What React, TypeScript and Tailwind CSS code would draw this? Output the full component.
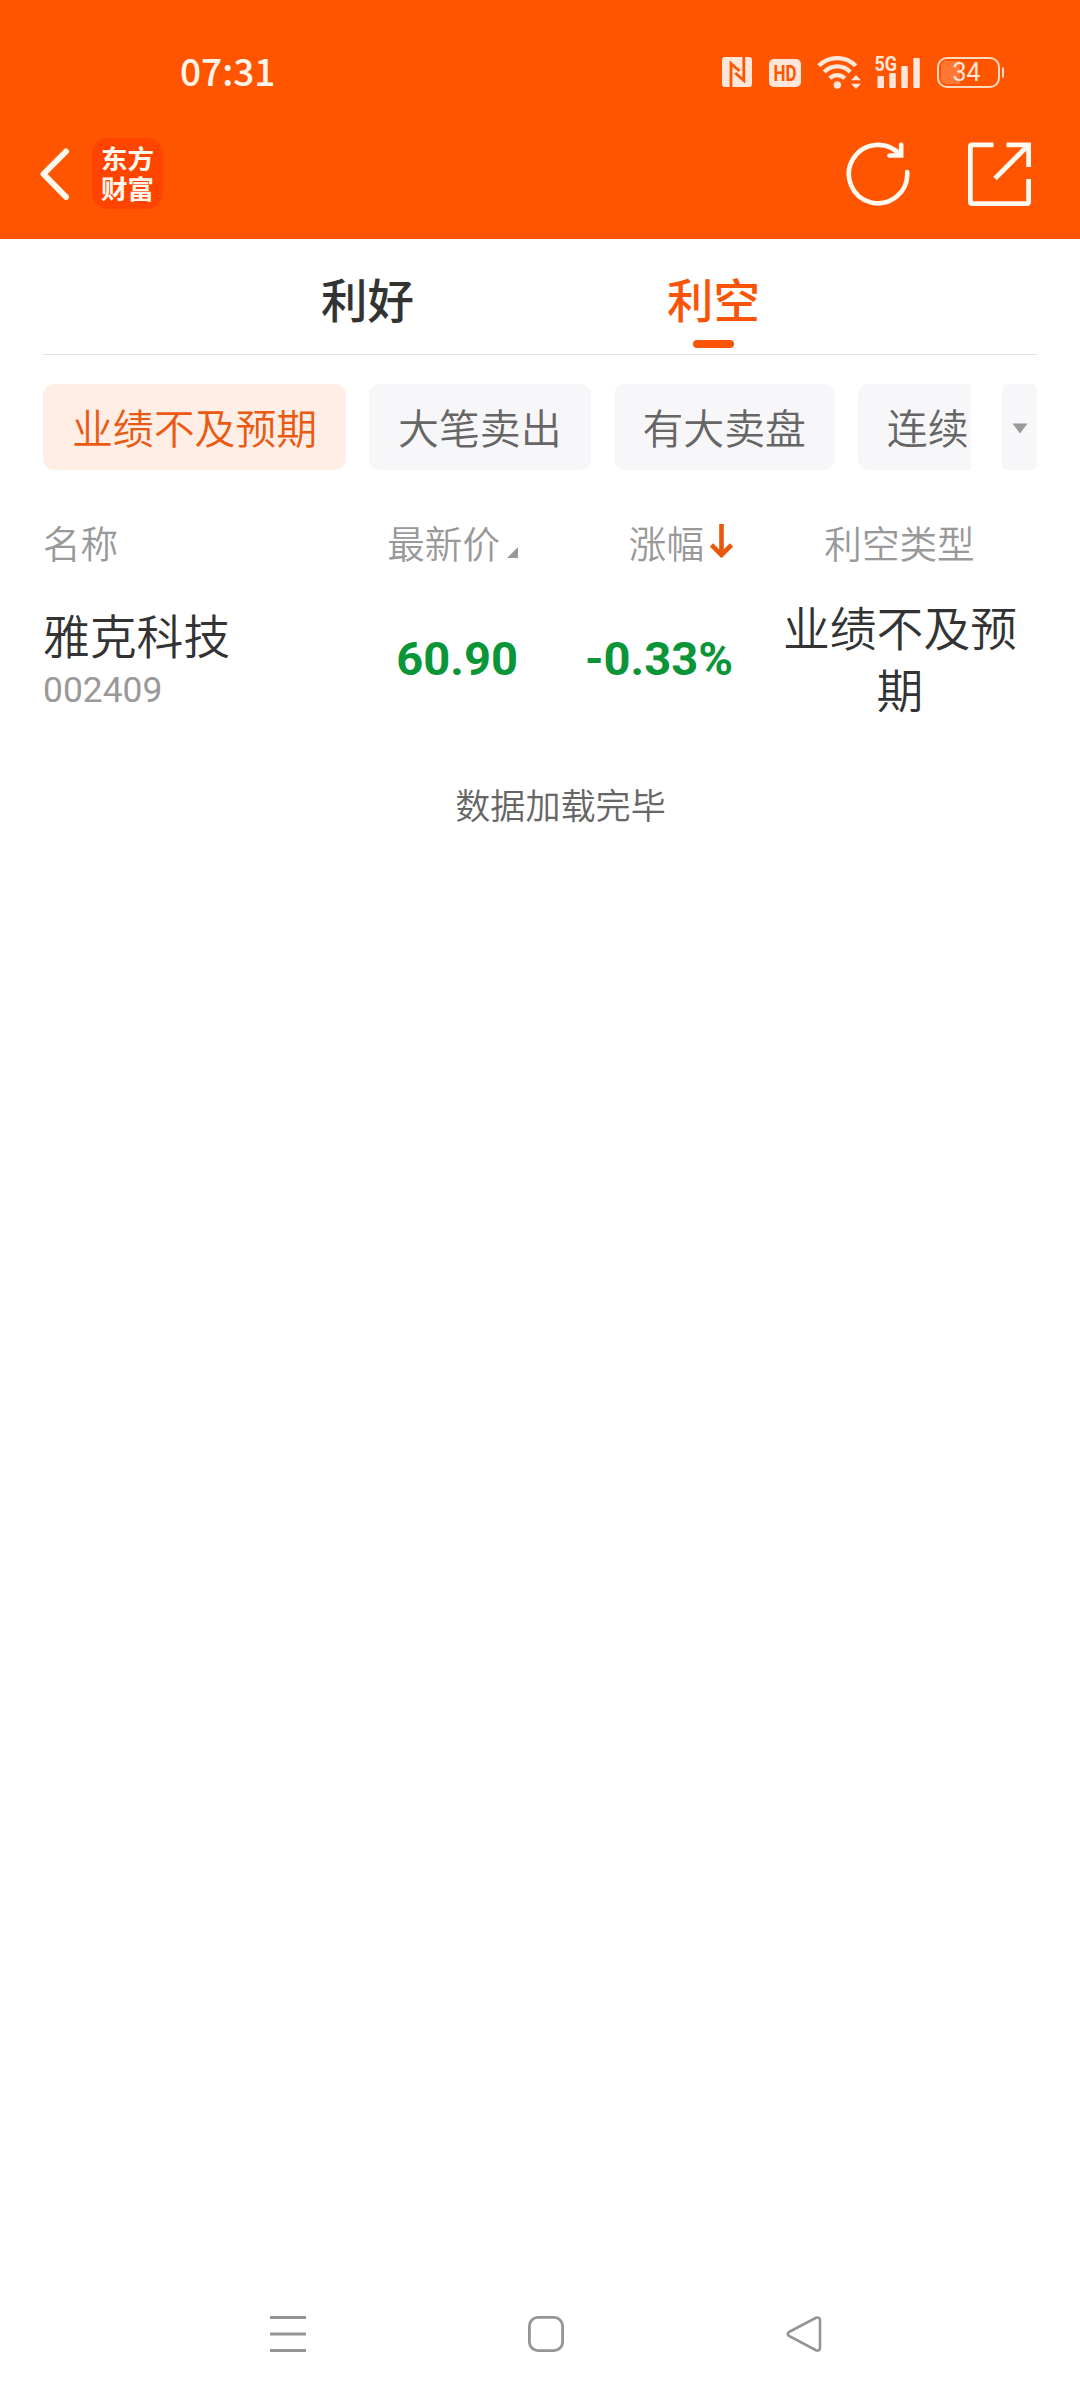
import { useState } from 'react'

interface Stock {
    name: string
    code: string
    price: string
    change: string
    type: string
}

const tabs = ['利好', '利空']
const tags = ['业绩不及预期', '大笔卖出', '有大卖盘', '连续']
const stocks: Stock[] = [
    { name: '雅克科技', code: '002409', price: '60.90', change: '-0.33%', type: '业绩不及预期' },
]

function StatusBar() {
    return (
        <div className="flex h-[108px] items-center pt-9 pr-[76px] pl-[180px] text-[#ffe6d8]">
            <span className="pb-[3px] text-[37px] leading-none font-medium text-[#fff5ea]">07:31</span>
            {/* NFC */}
            <svg className="ml-auto" width="30" height="30" viewBox="0 0 30 30">
                <rect width="30" height="30" rx="3" fill="currentColor" />
                <path d="M9 30V6.5L17.5 14M21.8 0V23.5L13.3 16" fill="none" stroke="#ff5500" strokeWidth="2.8" />
            </svg>
            {/* HD */}
            <svg className="mt-0.5 ml-[17px]" width="32" height="28" viewBox="0 0 32 28">
                <rect width="32" height="28" rx="5" fill="currentColor" />
                <text x="4.5" y="22" textLength="23" lengthAdjust="spacingAndGlyphs" fontSize="22.5" fontWeight="700" fontFamily="Roboto, sans-serif" fill="#ff5500">HD</text>
            </svg>
            {/* Wi-Fi */}
            <svg className="ml-4" width="44" height="34" viewBox="0 0 44 34">
                <g fill="none" stroke="currentColor" strokeWidth="4.2">
                    <path d="M1.8 10.8A26 26 0 0 1 38.8 10.8" />
                    <path d="M7.3 17A18 18 0 0 1 33.3 17" />
                    <path d="M12.8 23.2A10.5 10.5 0 0 1 27.8 23.2" />
                </g>
                <circle cx="20.3" cy="30" r="3.7" fill="currentColor" />
                <path d="M34 25.2L39 20L44 25.2ZM34 28.8L39 34L44 28.8Z" fill="currentColor" />
            </svg>
            {/* 5G signal */}
            <svg className="ml-3 overflow-visible" width="49" height="34" viewBox="-1 0 49 34">
                <text x="0.5" y="16.2" textLength="22.5" lengthAdjust="spacingAndGlyphs" fontSize="21" fontWeight="700" fontFamily="Roboto, sans-serif" fill="currentColor">5G</text>
                <g fill="currentColor">
                    <rect x="3.5" y="21" width="6.5" height="12" rx="1" />
                    <rect x="15.3" y="18" width="6.5" height="15" rx="1" />
                    <rect x="27.3" y="11" width="6.5" height="22" rx="1" />
                    <rect x="39.3" y="3" width="6.5" height="30" rx="1" />
                </g>
            </svg>
            {/* battery */}
            <div className="ml-[15px] flex h-[31px] w-[63px] items-center rounded-[10px] border-[2.5px] border-[#ffd9bd] p-0.5">
                <div className="h-full w-[19px] rounded-l-[5px] bg-[#ff7733]" />
                <span className="-ml-[7px] font-[Roboto] text-[25px] leading-none font-normal">34</span>
            </div>
            <div className="ml-0.5 h-[11px] w-[2.5px] rounded-r bg-[#ffd9bd]" />
        </div>
    )
}

function NavBar() {
    return (
        <div className="flex h-[131px] items-center pr-[49px] pl-[38px] text-[#fff9f0]">
            <svg width="32" height="54" viewBox="0 0 32 54" fill="none" stroke="currentColor" strokeWidth="6">
                <path d="M28 4.5L5.5 27L28 50" strokeLinecap="round" strokeLinejoin="round" />
            </svg>
            <div className="ml-[22px] flex h-[71px] w-[71px] flex-col items-center justify-center rounded-[16px] bg-[#ff4400] pb-0.5 text-[26.5px] leading-[30px] font-bold">
                <span>东方</span>
                <span>财富</span>
            </div>
            <svg className="ml-auto" width="64" height="64" viewBox="0 0 64 64" fill="none" stroke="currentColor" strokeWidth="4.6">
                <path d="M61.2 30A29.2 29.2 0 1 1 54 12.8" strokeLinecap="round" />
                <path d="M43.5 13.5H55.2V2.8" strokeLinecap="round" />
            </svg>
            <svg className="ml-[57px]" width="64" height="64" viewBox="0 0 64 64" fill="none" stroke="currentColor" strokeWidth="4.8">
                <path d="M26.5 2.9H5Q3.4 2.9 3.4 4.5V60Q3.4 61.6 5 61.6H60Q61.6 61.6 61.6 60V37" />
                <path d="M39.5 2.9H61.6V25M61 3.5L28 36.5" />
            </svg>
        </div>
    )
}

export default function App() {
    const [tab, setTab] = useState('利空')
    const [tag, setTag] = useState('业绩不及预期')

    return (
        <div className="flex h-[2400px] w-[1080px] flex-col bg-white font-['Noto_Sans_CJK_SC',sans-serif] font-[350]">
            <header className="h-[239px] bg-[#ff5500]">
                <StatusBar />
                <NavBar />
            </header>

            <main className="flex-1 px-[43px]">
                <div className="flex h-[116px] justify-center gap-[253px] border-b border-[#e2e2e2] pl-px">
                    {tabs.map(t => (
                        <button
                            key={t}
                            onClick={() => setTab(t)}
                            className={`flex flex-col items-center pt-[24px] text-[46.5px] leading-[70px] font-medium ${t === tab ? 'text-[#fa5408]' : 'text-[#333]'}`}
                        >
                            {t}
                            {t === tab && <span className="mt-[7px] h-2 w-[41px] rounded-full bg-[#fa5408]" />}
                        </button>
                    ))}
                </div>

                <div className="mt-[29px] flex h-[86px] justify-between">
                    <div className="flex w-[928px] gap-[23px] overflow-hidden">
                        {tags.map(t => (
                            <button
                                key={t}
                                onClick={() => setTag(t)}
                                className={`shrink-0 rounded-[11px] px-[28.9px] pb-px text-[40.9px] leading-[85px] ${t === tag ? 'bg-[#ffeee6] text-[#ea5a12]' : 'bg-[#f7f7fa] text-[#666]'}`}
                            >
                                {t}
                            </button>
                        ))}
                    </div>
                    <button className="flex w-[35px] items-center justify-center rounded-[5px] bg-[#f7f7fa] pt-0.5">
                        <svg width="16" height="11" viewBox="0 0 16 11" fill="#999">
                            <path d="M0.5 0.5H15.5L8 10.5Z" />
                        </svg>
                    </button>
                </div>

                <div className="mt-[44px] grid grid-cols-[260px_215px_215px_304px] text-[37.6px] leading-[56px] text-[#999]">
                    <span>名称</span>
                    <span className="flex items-center justify-end">
                        最新价
                        <svg className="mt-[20px] ml-[7px]" width="11" height="11" viewBox="0 0 11 11" fill="#999">
                            <path d="M11 0V11H0Z" />
                        </svg>
                    </span>
                    <span className="flex items-center justify-end">
                        涨幅
                        <svg className="mb-[2px] ml-[6px]" width="23" height="34" viewBox="0 0 23 34" fill="none" stroke="#e8590c" strokeWidth="4.6">
                            <path d="M11.5 0V31M1.5 21L11.5 31L21.5 21" />
                        </svg>
                    </span>
                    <span className="pl-[29px] text-center">利空类型</span>
                </div>

                {stocks.map(s => (
                    <div key={s.code} className="mt-[25px] grid grid-cols-[260px_215px_215px_304px] items-center text-[46.8px] text-[#333]">
                        <div className="pb-[2px]">
                            <div className="mb-[3px] leading-[60px]">{s.name}</div>
                            <div className="font-[Roboto] text-[35.4px] leading-[46px] font-normal text-[#999]">{s.code}</div>
                        </div>
                        <div className="pt-px text-right font-[Roboto] text-[47.1px] font-bold text-[#0a9638]">{s.price}</div>
                        <div className="pt-px text-right font-[Roboto] text-[47.1px] font-bold text-[#0a9638]">{s.change}</div>
                        <div className="pr-[16px] pb-1 pl-[46px] text-center leading-[62px]">{s.type}</div>
                    </div>
                ))}

                <div className="mt-[55px] pl-[41px] text-center text-[35.1px] leading-[52px] text-[#666]">数据加载完毕</div>
            </main>

            {/* system navigation */}
            <nav className="flex h-[117px] items-center justify-between pr-[257px] pb-[15px] pl-[269px] text-[#959595]">
                <svg width="38" height="38" viewBox="0 0 38 38" fill="none" stroke="currentColor" strokeWidth="3">
                    <path d="M1 2.5H37M1 19H37M1 35.5H37" />
                </svg>
                <svg width="38" height="38" viewBox="0 0 38 38" fill="none" stroke="currentColor" strokeWidth="2.8">
                    <rect x="2.4" y="2.4" width="33.2" height="33.2" rx="8.5" />
                </svg>
                <svg width="38" height="38" viewBox="0 0 38 38" fill="none" stroke="currentColor" strokeWidth="2.6">
                    <path d="M4 17L31 2.8Q35 1.5 35 5.5V32.5Q35 36.5 31 35.2L4 21Q1.5 19 4 17Z" />
                </svg>
            </nav>
        </div>
    )
}
